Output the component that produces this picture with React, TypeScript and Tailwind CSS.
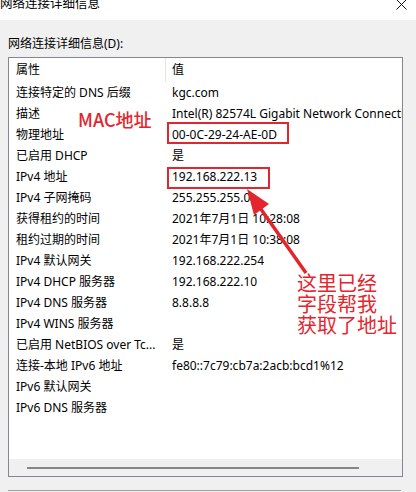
import React from "react";

const rows: [string, string][] = [
  ["连接特定的 DNS 后缀", "kgc.com"],
  ["描述", "Intel(R) 82574L Gigabit Network Connection"],
  ["物理地址", "00-0C-29-24-AE-0D"],
  ["已启用 DHCP", "是"],
  ["IPv4 地址", "192.168.222.13"],
  ["IPv4 子网掩码", "255.255.255.0"],
  ["获得租约的时间", "2021年7月1日 10:28:08"],
  ["租约过期的时间", "2021年7月1日 10:38:08"],
  ["IPv4 默认网关", "192.168.222.254"],
  ["IPv4 DHCP 服务器", "192.168.222.10"],
  ["IPv4 DNS 服务器", "8.8.8.8"],
  ["IPv4 WINS 服务器", ""],
  ["已启用 NetBIOS over Tc...", "是"],
  ["连接-本地 IPv6 地址", "fe80::7c79:cb7a:2acb:bcd1%12"],
  ["IPv6 默认网关", ""],
  ["IPv6 DNS 服务器", ""],
];

function DetailRow({ name, value }: { name: string; value: string }) {
  return (
    <div className="flex h-[21px] items-center whitespace-nowrap text-[12px] text-black">
      <div className="w-[157px] shrink-0 overflow-hidden pl-[7px]">{name}</div>
      <div className="overflow-hidden pl-[6px]">{value}</div>
    </div>
  );
}

function App() {
  return (
    <div
      className="relative h-[492px] w-[416px] overflow-hidden bg-[#f0f0f0]"
      style={{ fontFamily: '"Noto Sans", "Noto Sans CJK SC", sans-serif' }}
    >
      {/* title bar, cut off at the top */}
      <div className="flex h-[20px] items-start justify-between bg-white">
        <div className="-mt-[4px] text-[12.5px] leading-[16px] text-black">
          网络连接详细信息
        </div>
        <svg
          className="mr-[9px] -mt-[1px]"
          width="11"
          height="11"
          viewBox="0 0 11 11"
        >
          <path d="M0.5 0.5 L10.5 10.5 M10.5 0.5 L0.5 10.5" stroke="#111" strokeWidth="1" />
        </svg>
      </div>

      <div className="mt-[16px] pl-[8px] text-[12px] leading-[16px] text-black">
        网络连接详细信息(D):
      </div>

      {/* list view */}
      <div className="ml-[8px] mt-[5px] flex h-[420px] w-[395px] flex-col border border-[#828790] bg-white">
        <div className="flex h-[24px] shrink-0 items-center text-[12px] text-black">
          <div className="w-[156px] pl-[7px]">属性</div>
          <div className="h-full w-px bg-[#e5e5e5]" />
          <div className="pl-[6px]">值</div>
        </div>
        {rows.map(([n, v], i) => (
          <DetailRow key={i} name={n} value={v} />
        ))}
        <div className="flex-1" />
        <div className="flex h-[17px] shrink-0 items-center bg-[#f0f0f0]">
          <div className="ml-[18px] h-[2px] w-[332px] bg-[#868686]" />
        </div>
      </div>

      <div className="ml-[8px] mt-[13px] h-px w-[393px] bg-[#a0a0a0]" />

      {/* red annotations */}
      <div
        className="absolute left-[78px] top-[110px] text-[18px] font-medium leading-none text-[#e3262e]"
        style={{ fontFamily: '"Noto Sans CJK SC", sans-serif' }}
      >
        MAC地址
      </div>
      <div className="absolute left-[167px] top-[122px] h-[22px] w-[122px] border-2 border-[#e0262f]" />
      <div className="absolute left-[167px] top-[167px] h-[22px] w-[103px] border-2 border-[#e0262f]" />
      <div
        className="absolute left-[297px] top-[272px] text-[20px] leading-[21px] text-[#e3262e]"
        style={{ fontFamily: '"Noto Sans CJK SC", sans-serif' }}
      >
        这里已经
        <br />
        字段帮我
        <br />
        获取了地址
      </div>
      <svg className="absolute left-0 top-0" width="416" height="492">
        <line x1="306" y1="273" x2="258" y2="205" stroke="#e3262e" strokeWidth="3.5" />
        <polygon points="247,189 269,204 254,215" fill="#e3262e" />
      </svg>
    </div>
  );
}

export default App;
